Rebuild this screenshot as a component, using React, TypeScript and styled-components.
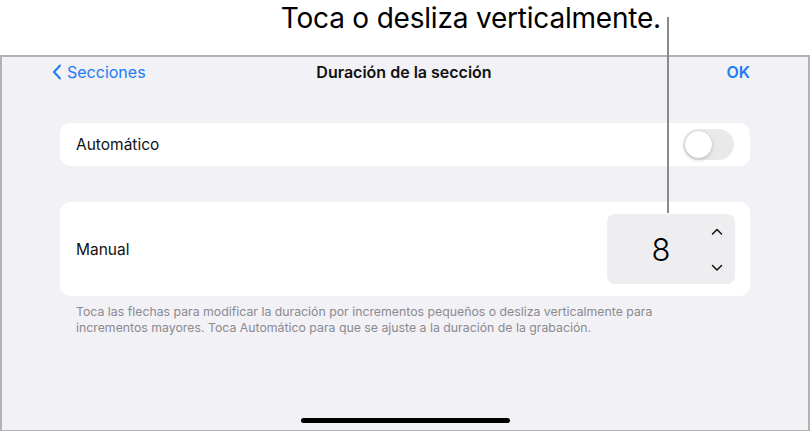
import styled, { createGlobalStyle } from "styled-components";

const GlobalStyle = createGlobalStyle`
  html, body {
    margin: 0;
    padding: 0;
    background: #ffffff;
  }
  body {
    font-family: Inter, "Liberation Sans", sans-serif;
    -webkit-font-smoothing: antialiased;
  }
`;

const Page = styled.div`
  position: relative;
  width: 811px;
  height: 431px;
  overflow: hidden;
`;

/* 画面上部の説明テキスト */
const CalloutRow = styled.div`
  height: 55px;
  display: flex;
  justify-content: flex-end;
  align-items: flex-start;
  padding-right: 150px;
  box-sizing: border-box;
`;

const CalloutText = styled.div`
  font-size: 28px;
  line-height: 34px;
  margin-top: 1px;
  color: #000;
  letter-spacing: -0.2px;
`;

/* 説明テキストからステッパーへの引き出し線 */
const LeaderLine = styled.div`
  position: absolute;
  left: 667px;
  top: 17px;
  width: 2px;
  height: 196px;
  background: #8a8a8a;
`;

const Device = styled.div`
  width: 810px;
  height: 376px;
  box-sizing: border-box;
  border: 2px solid #b2b2b4;
  border-bottom-width: 1px;
  background: #f2f1f6;
  display: flex;
  flex-direction: column;
`;

const NavBar = styled.div`
  display: grid;
  grid-template-columns: 1fr auto 1fr;
  align-items: center;
  height: 29px;
  padding: 0 58px 0 50px;
`;

const BackButton = styled.div`
  display: flex;
  align-items: center;
  gap: 5px;
  color: #1b7cf5;
  font-size: 16px;
`;

const NavTitle = styled.div`
  font-size: 16px;
  font-weight: 600;
  color: #111;
  padding-left: 6px;
`;

const DoneButton = styled.div`
  justify-self: end;
  color: #1b7cf5;
  font-size: 16px;
  font-weight: 600;
`;

const Content = styled.div`
  padding: 37px 58px 0;
  display: flex;
  flex-direction: column;
`;

const Card = styled.div<{ $height: number; $gap?: number }>`
  height: ${({ $height }) => $height}px;
  margin-top: ${({ $gap }) => $gap ?? 0}px;
  background: #ffffff;
  border-radius: 10px;
  display: flex;
  align-items: center;
  justify-content: space-between;
  padding: 0 15px 0 16px;
`;

const Label = styled.span`
  font-size: 15.5px;
  color: #111;
`;

const Toggle = styled.div`
  position: relative;
  width: 51px;
  height: 31px;
  border-radius: 16px;
  background: #e9e9eb;
  margin-right: 1px;
`;

const Knob = styled.div`
  position: absolute;
  left: 2px;
  top: 2px;
  width: 27px;
  height: 27px;
  border-radius: 50%;
  background: #fff;
  box-shadow: 0 2px 4px rgba(0, 0, 0, 0.16), 0 0 1px rgba(0, 0, 0, 0.2);
`;

const Stepper = styled.div`
  width: 128px;
  height: 70px;
  border-radius: 8px;
  background: #eeeef0;
  display: flex;
  align-items: center;
`;

const StepperValue = styled.div`
  flex: 1;
  text-align: center;
  padding-left: 16px;
  font-size: 31px;
  font-weight: 300;
  color: #000;
`;

const StepperArrows = styled.div`
  width: 36px;
  height: 100%;
  display: flex;
  flex-direction: column;
  justify-content: space-between;
  align-items: center;
  padding: 14px 0 12px;
  box-sizing: border-box;
`;

const Footnote = styled.p`
  margin: 8px 0 0;
  padding: 0 16px;
  font-size: 12.3px;
  line-height: 15.5px;
  color: #8a8a8e;
`;

const HomeIndicator = styled.div`
  margin: auto auto 7px;
  width: 209px;
  height: 5px;
  border-radius: 3px;
  background: #000;
`;

const Chevron = ({ dir }: { dir: "up" | "down" | "left" }) => {
  if (dir === "left") {
    return (
      <svg width="10" height="16" viewBox="0 0 10 16">
        <path d="M8 1.5 L2 8 L8 14.5" fill="none" stroke="#1b7cf5" strokeWidth="2" strokeLinecap="round" strokeLinejoin="round" />
      </svg>
    );
  }
  const d = dir === "up" ? "M1.5 6 L6 1.5 L10.5 6" : "M1.5 1.5 L6 6 L10.5 1.5";
  return (
    <svg width="12" height="8" viewBox="0 0 12 8">
      <path d={d} fill="none" stroke="#111" strokeWidth="1.5" strokeLinecap="round" strokeLinejoin="round" />
    </svg>
  );
};

export default function App() {
  return (
    <>
      <GlobalStyle />
      <Page>
        <CalloutRow>
          <CalloutText>Toca o desliza verticalmente.</CalloutText>
        </CalloutRow>
        <Device>
          <NavBar>
            <BackButton>
              <Chevron dir="left" />
              Secciones
            </BackButton>
            <NavTitle>Duración de la sección</NavTitle>
            <DoneButton>OK</DoneButton>
          </NavBar>
          <Content>
            <Card $height={43}>
              <Label>Automático</Label>
              <Toggle>
                <Knob />
              </Toggle>
            </Card>
            <Card $height={94} $gap={36}>
              <Label>Manual</Label>
              <Stepper>
                <StepperValue>8</StepperValue>
                <StepperArrows>
                  <Chevron dir="up" />
                  <Chevron dir="down" />
                </StepperArrows>
              </Stepper>
            </Card>
            <Footnote>
              Toca las flechas para modificar la duración por incrementos pequeños o desliza verticalmente para
              <br />
              incrementos mayores. Toca Automático para que se ajuste a la duración de la grabación.
            </Footnote>
          </Content>
          <HomeIndicator />
        </Device>
        <LeaderLine />
      </Page>
    </>
  );
}
